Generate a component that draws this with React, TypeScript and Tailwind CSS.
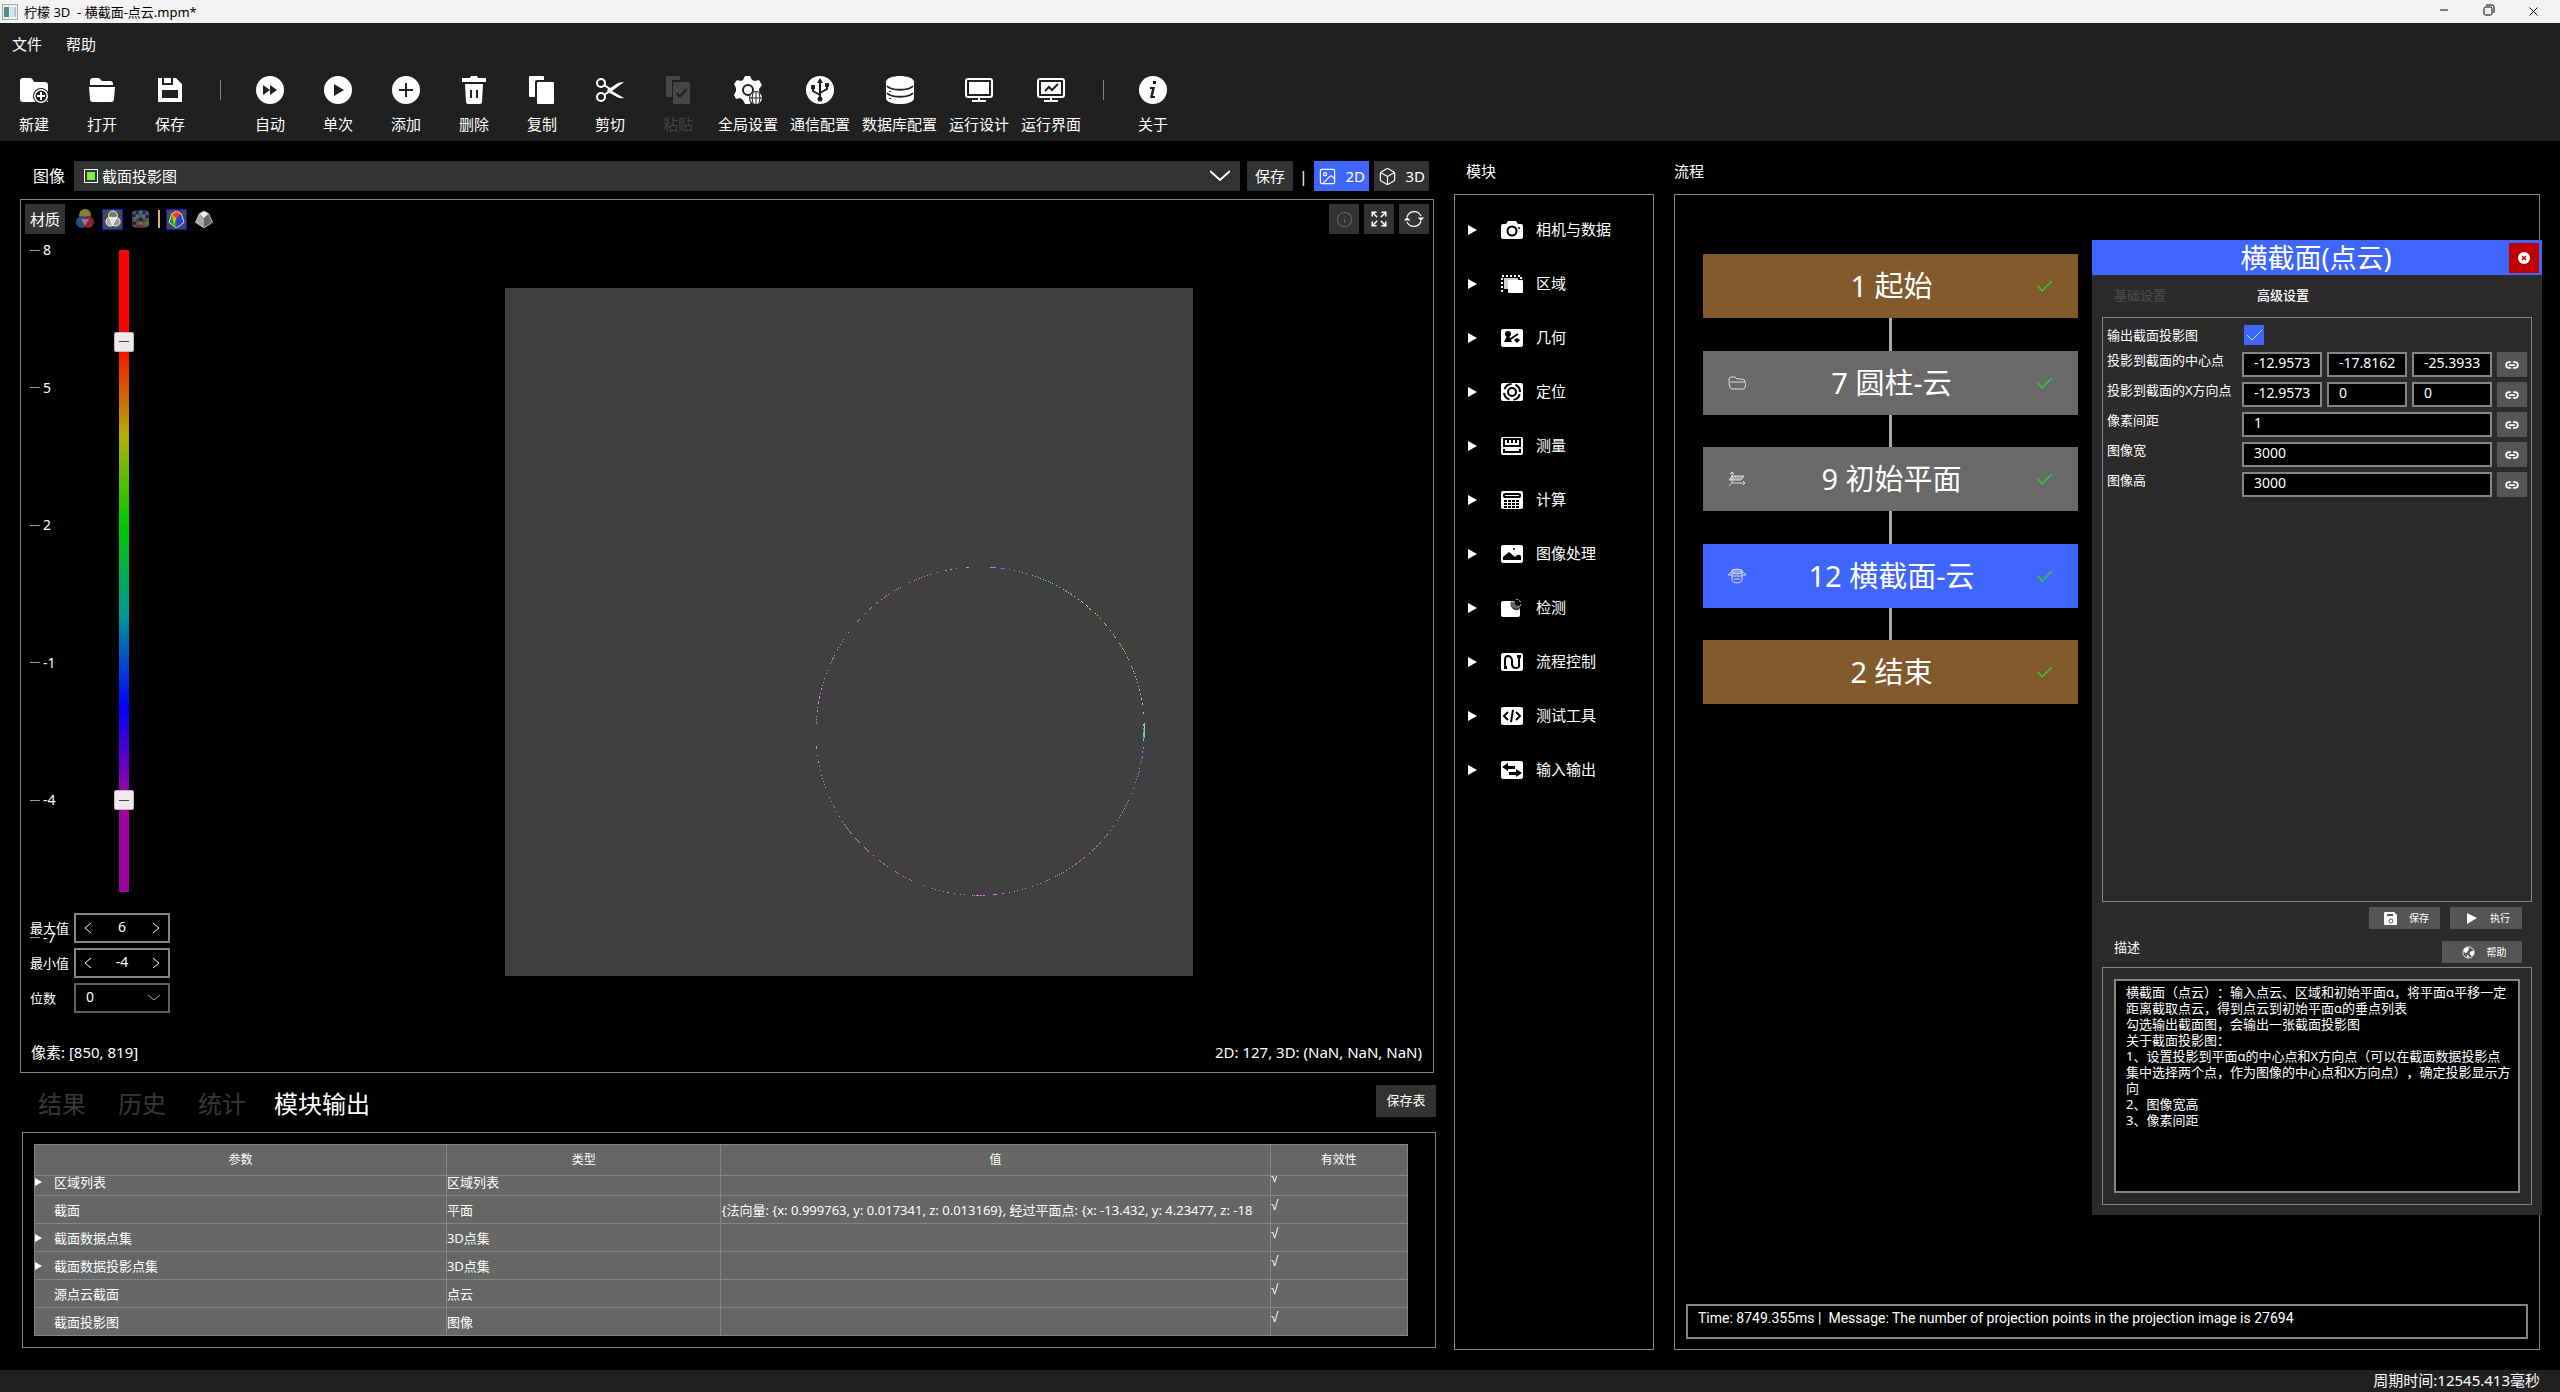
import React from "react";
import { Box, Expand, Image as ImageIcon, Info, Link2, Minus, X } from "lucide-react";

const svgProps = { viewBox: "0 0 28 28", className: "size-7", fill: "currentColor" };

const icons: Record<string, React.ReactNode> = {
  new: (
    <svg {...svgProps}>
      <path d="M0 5q0-3 3-3h7q2 0 3 2l1 2h11q3 0 3 3v17H3q-3 0-3-3z" />
      <circle cx="21" cy="20" r="8" fill="#202020" />
      <circle cx="21" cy="20" r="7" />
      <circle cx="21" cy="20" r="5.5" fill="#202020" />
      <path d="M20 16h2v3h3v2h-3v3h-2v-3h-3v-2h3z" />
    </svg>
  ),
  open: (
    <svg {...svgProps}>
      <path d="M2 9V5q0-3 3-3h5q2 0 3 2l1 1h8q3 0 3 3v1zM1 11h26l-1 12q0 3-3 3H5q-3 0-3-3z" />
    </svg>
  ),
  save: (
    <svg {...svgProps} fillRule="evenodd">
      <path d="M2 2h4v7h11V2h3l6 6v18H2zM8 2h7v5H8zM6 14v8h16v-8z" />
    </svg>
  ),
  auto: (
    <svg {...svgProps} fillRule="evenodd">
      <path d="M14 0a14 14 0 100 28 14 14 0 000-28zM7 9l7 5-7 5zm7 0l7 5-7 5z" />
    </svg>
  ),
  once: (
    <svg {...svgProps} fillRule="evenodd">
      <path d="M14 0a14 14 0 100 28 14 14 0 000-28zM10 8l10 6-10 6z" />
    </svg>
  ),
  add: (
    <svg {...svgProps} fillRule="evenodd">
      <path d="M14 0a14 14 0 100 28 14 14 0 000-28zM13 7v6H7v2h6v6h2v-6h6v-2h-6V7z" />
    </svg>
  ),
  remove: (
    <svg {...svgProps} fillRule="evenodd">
      <path d="M2 2h8l1-2h6l1 2h8v4H2zM5 8h18l-1 18q0 2-2 2H8q-2 0-2-2zM10 14v8h2v-8zm6 0v8h2v-8z" />
    </svg>
  ),
  copy: (
    <svg {...svgProps}>
      <path d="M1 1q0-1 1-1h13q1 0 1 1v3H9q-2 0-2 2v15H2q-1 0-1-1zM9 7q0-1 1-1h15q1 0 1 1v20q0 1-1 1H10q-1 0-1-1z" />
    </svg>
  ),
  cut: (
    <svg {...svgProps}>
      <g fill="none" stroke="currentColor" strokeWidth="2">
        <circle cx="5" cy="7" r="4" />
        <circle cx="5" cy="21" r="4" />
        <path d="M8 9l6 4M8 19l6-4" />
      </g>
      <path d="M11 14L22 7q3-1 6-1l-12 9 12 7q-4 1-7-1l-9-5z" />
    </svg>
  ),
  paste: (
    <svg {...svgProps} fillRule="evenodd">
      <path d="M2 1q0-1 1-1h13v4H8v17H3q-1 0-1-1zM9 7q0-1 1-1h15q1 0 1 1v20q0 1-1 1H10q-1 0-1-1zM12 18l4 4 7-8-1-2-6 7-3-3z" />
    </svg>
  ),
  settings: (
    <svg {...svgProps}>
      <path d="M11 0h5l2 4 3 1 4-1 3 5-3 4v2l3 4-3 5-4-1-3 1-2 4h-5l-2-4-3-2-4 1-2-4 2-4v-3L0 8l3-4 4 1 2-1z" />
      <circle cx="14" cy="14" r="5" fill="none" stroke="#202020" strokeWidth="2" />
      <circle cx="22" cy="22" r="7" fill="#202020" />
      <circle cx="22" cy="22" r="6" />
      <path d="M16 22h12M22 16v12M19 17q-2 5 0 10M25 17q2 5 0 10" fill="none" stroke="#202020" />
    </svg>
  ),
  comm: (
    <svg {...svgProps}>
      <circle cx="14" cy="14" r="14" />
      <g fill="none" stroke="#202020" strokeWidth="2">
        <path d="M14 5v18M14 19l-7-4v-4M14 17l7-4v-4" />
      </g>
      <path d="M14 2l3 5h-6zM5 9h4v4H5zM19 7h4v4h-4z" fill="#202020" />
      <circle cx="14" cy="23" r="2.5" fill="#202020" />
    </svg>
  ),
  database: (
    <svg {...svgProps}>
      <path d="M0 6c0-8 28-8 28 0v16c0 8-28 8-28 0z" />
      <path d="M1 10c4 5 22 5 26 0M1 17c4 5 22 5 26 0" fill="none" stroke="#202020" strokeWidth="2" />
      <path d="M3 15h2v1H3zM3 22h2v1H3z" fill="#202020" />
    </svg>
  ),
  design: (
    <svg {...svgProps}>
      <rect x="1" y="3" width="26" height="18" rx="2" fill="none" stroke="currentColor" strokeWidth="2" />
      <path d="M4 6h20v12H4zM13 21h2v3h6v2H7v-2h6z" />
    </svg>
  ),
  screen: (
    <svg {...svgProps}>
      <rect x="1" y="3" width="26" height="18" rx="2" fill="none" stroke="currentColor" strokeWidth="2" />
      <path d="M4 6h20v12H4zM13 21h2v3h6v2H7v-2h6z" />
      <path d="M8 15l4-4 3 3 6-6" fill="none" stroke="#202020" strokeWidth="2" />
    </svg>
  ),
  about: (
    <svg {...svgProps}>
      <circle cx="14" cy="14" r="14" />
      <path d="M14 5h3v3h-3zM11 11h5l-2 9h2v2h-5l2-9h-2z" fill="#202020" />
    </svg>
  ),
};

const toolbar = [
  { icon: "new", label: "新建" },
  { icon: "open", label: "打开" },
  { icon: "save", label: "保存" },
  null,
  { icon: "auto", label: "自动" },
  { icon: "once", label: "单次" },
  { icon: "add", label: "添加" },
  { icon: "remove", label: "删除" },
  { icon: "copy", label: "复制" },
  { icon: "cut", label: "剪切" },
  { icon: "paste", label: "粘贴", disabled: true },
  { icon: "settings", label: "全局设置" },
  { icon: "comm", label: "通信配置" },
  { icon: "database", label: "数据库配置" },
  { icon: "design", label: "运行设计" },
  { icon: "screen", label: "运行界面" },
  null,
  { icon: "about", label: "关于" },
];

const line = { fill: "none", stroke: "#000", strokeWidth: 2 };

const modules = [
  {
    label: "相机与数据",
    icon: (
      <>
        <path d="M0 5q0-2 2-2h3l2-3h8l2 3h3q2 0 2 2v11q0 2-2 2H2q-2 0-2-2z" />
        <circle cx="11" cy="10" r="4.5" {...line} />
        <circle cx="18" cy="7" r="1" fill="#000" />
      </>
    ),
  },
  {
    label: "区域",
    icon: (
      <>
        <path d="M1 17V1h19v4" fill="none" stroke="currentColor" strokeWidth="2" strokeDasharray="2 2" />
        <path d="M3 3h14v3H8v8H3z" opacity="0.8" />
        <rect x="7" y="5" width="15" height="13" rx="1" />
      </>
    ),
  },
  {
    label: "几何",
    icon: (
      <>
        <rect width="22" height="18" rx="2" />
        <g fill="#000">
          <circle cx="7" cy="5" r="3" />
          <path d="M6 7h2l3 6H3zM16 9l3 2-3 3-3-3z" />
        </g>
        <path d="M8 11l9-6" {...line} />
      </>
    ),
  },
  {
    label: "定位",
    icon: (
      <>
        <rect width="22" height="18" rx="2" />
        <circle cx="11" cy="9" r="4" {...line} />
        <circle cx="11" cy="9" r="8" {...line} strokeDasharray="9 4" strokeDashoffset="-2" />
      </>
    ),
  },
  {
    label: "测量",
    icon: (
      <>
        <rect width="22" height="18" rx="2" />
        <path d="M3 2h16v7H3zM7 2v4M11 2v4M15 2v4M3 12v3h16v-3" {...line} />
      </>
    ),
  },
  {
    label: "计算",
    icon: (
      <>
        <rect width="22" height="18" rx="2" />
        <rect x="3" y="3" width="16" height="3" rx="1" {...line} />
        <path d="M3 10h16M3 13h16M3 16h16" {...line} strokeDasharray="3 1" />
      </>
    ),
  },
  {
    label: "图像处理",
    icon: (
      <>
        <rect width="22" height="18" rx="2" />
        <path d="M2 15V12l6-5 6 5q3-4 6-1v4z" fill="#000" />
        <circle cx="13" cy="4" r="1" fill="#000" />
      </>
    ),
  },
  {
    label: "检测",
    icon: (
      <>
        <rect y="2" width="19" height="16" rx="2" />
        <path d="M14 2v4h5V1l2 4-2 5q-2 2-5 1-4-1-4-6 1-3 4-3z" fill="#000" opacity="0.6" />
        <path d="M14 1h5v6l-5-1z" fill="#000" />
        <circle cx="15" cy="5" r="5" fill="none" stroke="#000" strokeDasharray="2 1" />
        <path d="M15 0q4 0 5 5-1 3-3 4" fill="none" stroke="currentColor" strokeDasharray="2 2" />
      </>
    ),
  },
  {
    label: "流程控制",
    icon: (
      <>
        <rect width="22" height="18" rx="2" />
        <path d="M4 15V7q0-4 3-4t4 4v4q0 4 4 4t3-4V4" {...line} />
        <path d="M3 13h3v3H3zM16 2h4v3h-4z" fill="#000" />
      </>
    ),
  },
  {
    label: "测试工具",
    icon: (
      <>
        <rect width="22" height="18" rx="2" />
        <path d="M7 5L3 9l4 4M15 5l4 4-4 4M12 3l-2 12" {...line} />
      </>
    ),
  },
  {
    label: "输入输出",
    icon: (
      <>
        <rect width="22" height="18" rx="2" />
        <path d="M1 6l6-4v3h7v3H7v2zM21 12l-6-4v3H8v3h7v2z" fill="#000" />
      </>
    ),
  },
];

const steps = [
  { title: "1 起始", color: "bg-[#835a2c]" },
  {
    title: "7 圆柱-云",
    color: "bg-[#696969]",
    icon: <path d="M1 7V4q0-2 2-2h4l2 2h5q3 0 3 3M2 7h14q2 0 2 2l-1 3q0 2-2 2H4q-2 0-2-2L1 9q0-2 1-2z" />,
  },
  {
    title: "9 初始平面",
    color: "bg-[#696969]",
    icon: (
      <>
        <path d="M4 1v11h13M4 12l-3 3M15 10l2 2-2 2M2 3l2-2 2 2" />
        <path d="M4 5h12l-3 4H1z" fill="#ddd" fillOpacity="0.5" />
      </>
    ),
  },
  {
    title: "12 横截面-云",
    color: "bg-[#3f66ff]",
    icon: (
      <>
        <path d="M4 2q5-2 10 0v3q-5 2-10 0z" fill="#ddd" fillOpacity="0.5" />
        <path d="M4 5v7q1 3 5 3t5-3V5M4 8h10M6 11h6M4 3L0 7h4M14 3l4 4h-4" />
      </>
    ),
  },
  { title: "2 结束", color: "bg-[#835a2c]" },
];

// Section points, stored at three units per pixel.
const cloud: { color: string; points: number[][] }[] = [
  {
    color: "#d87fdc",
    points: [
      [560, 82], [563, 82], [566, 82], [530, 85], [512, 88], [515, 88], [497, 91], [500, 91], [473, 97], [452, 103],
      [443, 106], [434, 109], [425, 112], [419, 115], [410, 118], [404, 121], [389, 127], [362, 142], [356, 145],
      [350, 148], [344, 151], [326, 163], [320, 166], [317, 169], [314, 172], [305, 178], [293, 187], [290, 190],
      [275, 202], [272, 205], [269, 208], [257, 220], [239, 238], [236, 241], [233, 244], [206, 277], [191, 298],
      [188, 304], [182, 313], [176, 322], [173, 328], [164, 346], [161, 352], [158, 355], [158, 358], [155, 364],
      [152, 370], [143, 391], [140, 400], [134, 415], [131, 427], [128, 436], [125, 445], [125, 448], [122, 460],
      [119, 469], [119, 472], [119, 475], [116, 484], [116, 487], [116, 490], [113, 502], [113, 511], [113, 514],
      [110, 529], [110, 538], [110, 544], [110, 550], [110, 619], [110, 622], [110, 625], [113, 646], [116, 664],
      [116, 667], [119, 679], [122, 691], [125, 706], [128, 715], [131, 724], [134, 733], [137, 742], [149, 772],
      [155, 784], [161, 796], [164, 802], [170, 814], [179, 829], [188, 844], [194, 853], [197, 856], [200, 862],
      [203, 865], [206, 868], [209, 874], [212, 877], [215, 880], [227, 895], [230, 898], [233, 901], [236, 904],
      [239, 907], [254, 922], [257, 925], [260, 928], [263, 931], [266, 934], [281, 946], [299, 961], [302, 964],
      [311, 970], [314, 973], [323, 979], [347, 994], [350, 997], [356, 1000], [371, 1009], [377, 1012], [389, 1018],
      [395, 1021], [431, 1036], [458, 1045], [467, 1048], [479, 1051], [491, 1054], [503, 1057], [506, 1057],
      [524, 1060], [542, 1063], [554, 1063], [578, 1066], [584, 1066], [590, 1066], [593, 1066], [596, 1066],
      [602, 1066], [605, 1066], [611, 1066], [614, 1066], [641, 1063], [644, 1063], [647, 1063], [650, 1063],
      [668, 1060], [671, 1060], [689, 1057], [704, 1054], [713, 1051], [728, 1048], [737, 1045], [758, 1039],
      [773, 1033], [782, 1030], [797, 1024], [803, 1021], [809, 1018], [827, 1009], [833, 1006], [839, 1003],
      [845, 1000], [851, 997], [860, 991], [869, 985], [878, 979], [887, 973], [890, 970], [899, 964], [902, 961],
      [911, 955], [914, 952], [929, 940], [938, 931], [941, 928], [944, 925], [950, 919], [953, 916], [959, 910],
      [962, 907], [974, 892], [980, 886], [983, 883], [992, 871], [1001, 859], [1013, 841], [1019, 832], [1022, 826],
      [1028, 817], [1031, 811], [1034, 805], [1037, 799], [1040, 793], [1043, 787], [1046, 781], [1055, 760],
    ],
  },
  {
    color: "#b07ff0",
    points: [
      [632, 82], [635, 82], [638, 82], [641, 82], [644, 82], [647, 82], [1061, 745], [1067, 727], [1070, 718],
      [1073, 709], [1076, 703], [1076, 697], [1079, 694], [1079, 685],
    ],
  },
  {
    color: "#7f8cf5",
    points: [
      [665, 85], [668, 85], [674, 85], [689, 88], [704, 91], [1082, 670], [1085, 664], [1085, 655], [1088, 652],
      [1088, 649], [1088, 637], [1088, 634], [1091, 625], [1091, 622],
    ],
  },
  {
    color: "#74c9c4",
    points: [
      [719, 94], [728, 97], [740, 100], [758, 106], [1091, 601], [1091, 598], [1091, 595], [1091, 589], [1091, 586],
      [1091, 583], [1091, 580], [1091, 577], [1091, 571], [1091, 565], [1094, 592], [1094, 589], [1094, 586],
      [1094, 583], [1094, 580], [1094, 577], [1094, 574], [1094, 571], [1094, 568],
    ],
  },
  {
    color: "#7fdca0",
    points: [
      [767, 109], [776, 112], [782, 115], [791, 118], [797, 121], [806, 124], [812, 127], [818, 130], [830, 136],
      [839, 142], [1094, 565], [1094, 562], [1094, 559], [1094, 556], [1094, 553], [1094, 550], [1091, 556],
      [1091, 553], [1091, 520], [1091, 517],
    ],
  },
  {
    color: "#b4e07a",
    points: [
      [851, 148], [857, 151], [860, 154], [866, 157], [872, 160], [875, 163], [884, 169], [1088, 493], [1088, 490],
      [1085, 478], [1085, 475], [1082, 463], [1079, 451], [1079, 448], [1076, 439],
    ],
  },
  {
    color: "#dedb7a",
    points: [
      [896, 178], [905, 184], [908, 187], [920, 196], [923, 199], [929, 205], [932, 208], [947, 220], [953, 226],
      [1073, 427], [1070, 418], [1067, 409], [1064, 400], [1061, 394], [1058, 385], [1055, 379], [1046, 358],
      [1043, 352],
    ],
  },
  {
    color: "#f0b070",
    points: [
      [962, 235], [974, 250], [977, 253], [980, 256], [992, 271], [1001, 283], [1004, 289], [1007, 292], [1019, 310],
      [1022, 313], [1025, 319], [1028, 325], [1031, 328], [1034, 334], [1037, 340],
    ],
  },
];

const rows = [
  { name: "区域列表", type: "区域列表", value: "", open: true },
  {
    name: "截面",
    type: "平面",
    value: "{法向量: {x: 0.999763, y: 0.017341, z: 0.013169}, 经过平面点: {x: -13.432, y: 4.23477, z: -18",
  },
  { name: "截面数据点集", type: "3D点集", value: "", open: true },
  { name: "截面数据投影点集", type: "3D点集", value: "", open: true },
  { name: "源点云截面", type: "点云", value: "" },
  { name: "截面投影图", type: "图像", value: "" },
];

const params = [
  { label: "投影到截面的中心点", values: ["-12.9573", "-17.8162", "-25.3933"] },
  { label: "投影到截面的X方向点", values: ["-12.9573", "0", "0"] },
  { label: "像素间距", values: ["1"] },
  { label: "图像宽", values: ["3000"] },
  { label: "图像高", values: ["3000"] },
];

const description = `横截面（点云）：输入点云、区域和初始平面α，将平面α平移一定
距离截取点云，得到点云到初始平面α的垂点列表
勾选输出截面图，会输出一张截面投影图
关于截面投影图：
1、设置投影到平面α的中心点和X方向点（可以在截面数据投影点
集中选择两个点，作为图像的中心点和X方向点），确定投影显示方
向
2、图像宽高
3、像素间距`;

const TitleBar = () => (
  <header className="flex h-[23px] items-center bg-[#f3f3f3] pr-1 pl-[2px] text-black">
    <svg viewBox="0 0 16 16" className="size-4">
      <rect x="0.5" y="0.5" width="15" height="15" fill="#eee" stroke="#aaa" />
      <path d="M2 3h5v10H2z" fill="#4b8f8c" />
      <path d="M8 3h3v10H8z" fill="#cfe3ee" />
      <path d="M12 3h2v10h-2z" fill="#b4c6d0" />
    </svg>
    <h1 className="ml-1.5 flex-1 whitespace-pre text-[13px] leading-5">柠檬 3D  - 横截面-点云.mpm*</h1>
    <div className="flex">
      <button aria-label="最小化" className="flex w-[45px] justify-center">
        <Minus size={12} strokeWidth={2} />
      </button>
      <button aria-label="还原" className="flex w-[45px] justify-center">
        <svg viewBox="0 0 12 12" className="size-3" fill="none" stroke="currentColor">
          <rect x="1" y="3" width="8" height="8" rx="1.5" />
          <path d="M3 1h6q2 0 2 2v6" />
        </svg>
      </button>
      <button aria-label="关闭" className="flex w-[45px] justify-center">
        <X size={15} strokeWidth={1.5} />
      </button>
    </div>
  </header>
);

const Toolbar = () => (
  <div className="flex h-[118px] flex-col bg-[#202020] text-[15px] leading-5">
    <nav className="flex gap-6 pt-[11px] pl-3">
      <button>文件</button>
      <button>帮助</button>
    </nav>
    <div className="flex pt-[22px]">
      {toolbar.map((item, i) =>
        item ? (
          <button
            key={item.label}
            disabled={item.disabled}
            className="flex min-w-[68px] flex-col items-center gap-[10px] px-1.5 disabled:text-[#454545]"
          >
            {icons[item.icon]}
            <span>{item.label}</span>
          </button>
        ) : (
          <div key={i} className="mt-1 ml-4 mr-[15px] h-5 w-px bg-[#808080]" />
        )
      )}
    </div>
  </div>
);

const ColorScale = () => (
  <div className="relative h-[642px] text-[14px] leading-5">
    {[8, 5, 2, -1, -4, -7].map((n) => (
      <div
        key={n}
        className="absolute left-[9px] flex -translate-y-1/2 items-center gap-[3px]"
        style={{ top: `${((8 - n) / 14) * 100}%` }}
      >
        <span className="h-px w-2.5 bg-[#999]" />
        {n}
      </div>
    ))}
    <div className="absolute left-[98px] h-full w-2.5 bg-[linear-gradient(to_bottom,#f00_14.2%,#b0b000_29%,#00c800_43%,#009696_57%,#00f_71.3%,#a000a0_85%)]" />
    {[6, -4].map((n) => (
      <input
        key={n}
        type="range"
        aria-label={n > 0 ? "上限" : "下限"}
        min={-6}
        max={8}
        defaultValue={n}
        className="pointer-events-none absolute -top-2.5 left-[93px] h-[662px] w-5 appearance-none bg-transparent [direction:rtl] [writing-mode:vertical-lr] [&::-webkit-slider-thumb]:pointer-events-auto [&::-webkit-slider-thumb]:h-5 [&::-webkit-slider-thumb]:w-5 [&::-webkit-slider-thumb]:appearance-none [&::-webkit-slider-thumb]:rounded-xs [&::-webkit-slider-thumb]:border [&::-webkit-slider-thumb]:border-[#bbb] [&::-webkit-slider-thumb]:bg-[#efe9e9] [&::-webkit-slider-thumb]:bg-[linear-gradient(#444,#444)] [&::-webkit-slider-thumb]:bg-[length:10px_1px] [&::-webkit-slider-thumb]:bg-center [&::-webkit-slider-thumb]:bg-no-repeat"
      />
    ))}
  </div>
);

const Spin = ({ id, label, value }: any) => (
  <div className="flex items-center">
    <label htmlFor={id} className="w-11">
      {label}
    </label>
    <div className="flex h-[30px] w-24 items-center justify-between border-2 border-[#858585] px-2">
      <button aria-label="减小">
        <svg viewBox="0 0 8 12" className="h-3 w-2" fill="none" stroke="currentColor">
          <path d="M7 1L1 6l6 5" />
        </svg>
      </button>
      <input id={id} defaultValue={value} className="h-5 w-12 pb-1 text-center text-[14px] outline-none" />
      <button aria-label="增大">
        <svg viewBox="0 0 8 12" className="h-3 w-2" fill="none" stroke="currentColor">
          <path d="M1 1l6 5-6 5" />
        </svg>
      </button>
    </div>
  </div>
);

const Viewer = () => (
  <section className="flex min-h-0 flex-1 flex-col border border-[#858585]">
    <div className="flex h-[34px] items-end justify-between pr-1 pl-1">
      <div className="flex items-center">
        <button className="h-[30px] w-10 bg-[#333] text-[15px]">材质</button>
        <div className="ml-[11px] flex items-center gap-1.5">
          <svg viewBox="0 0 18 20" className="mr-0.5 h-5 w-[18px]">
            <circle cx="9" cy="6" r="6" fill="#85803c" />
            <circle cx="6" cy="13" r="6" fill="#1f5285" />
            <circle cx="12" cy="13" r="6" fill="#8a2430" />
            <path d="M5 10l8 0-4 7z" fill="#8f7d95" />
          </svg>
          <span className="flex size-[21px] items-center justify-center border border-[#1414c8] bg-[#484848]">
            <svg viewBox="0 0 18 20" className="h-[18px] w-4" fill="#ddd" stroke="#fff">
              <circle cx="9" cy="6" r="5" fill="#777" />
              <circle cx="6" cy="13" r="5" fill="#aaa" />
              <circle cx="12" cy="13" r="5" fill="#999" />
              <path d="M5 9h8l-4 7z" />
            </svg>
          </span>
          <svg viewBox="0 0 18 18" className="ml-[3px] h-[18px] w-[17px]">
            <rect width="18" height="18" rx="4" fill="#555" />
            <path d="M4 0h3v4H4zM11 0h3v4h-3zM0 4h4v3H0zM7 8h4v3H7zM0 12h4v3H0zM14 5h4v3h-4z" fill="#16168c" />
            <path d="M8 0h3v3H8zM4 5h3v3H4zM11 5h3v3h-3zM1 8h3v3H1zM14 12h3v3h-3zM7 12h4v3H7z" fill="#3c8c3c" />
            <path d="M4 9h3v3H4zM11 9h3v3h-3zM8 15h3v3H8zM4 15h3v3H4zM0 9h2v2H0z" fill="#8c2020" />
          </svg>
          <span className="ml-[3px] h-[18px] w-0.5 bg-[#e0b070]" />
          <span className="flex size-[21px] items-center justify-center border border-[#1414c8] bg-[#484848]">
            <svg viewBox="0 0 18 18" className="size-[17px]">
              <path d="M9 0l5 3-5 5-5-5z" fill="#f33" />
              <path d="M4 3l5 5v10l-8-6z" fill="#1a9c3c" />
              <path d="M14 3L9 8v10l8-6z" fill="#2440e0" />
              <path d="M4 3l5 5-3 7z" fill="#d8b020" />
              <path d="M9 0l5 3 3 9-8 6-8-6 3-9z" fill="none" stroke="#cfe0ff" />
            </svg>
          </span>
          <svg viewBox="0 0 18 18" className="ml-0.5 h-[17px] w-[18px]">
            <path d="M9 0l5 3-5 5-5-5z" fill="#eee" />
            <path d="M4 3l5 5v10l-9-6z" fill="#aaa" />
            <path d="M14 3L9 8v10l9-6z" fill="#666" />
            <path d="M9 0l5 3 4 9-9 6-9-6 4-9z" fill="none" stroke="#bbb" />
          </svg>
        </div>
      </div>
      <div className="flex gap-[5px]">
        <button disabled aria-label="信息" className="grid size-[30px] place-items-center bg-[#333] text-[#666]">
          <Info size={17} strokeWidth={1.5} />
        </button>
        <button aria-label="适应窗口" className="grid size-[30px] place-items-center bg-[#333]">
          <Expand size={18} strokeWidth={2} />
        </button>
        <button aria-label="刷新" className="grid size-[30px] place-items-center bg-[#333]">
          <svg viewBox="0 0 20 18" className="h-[18px] w-5" fill="none" stroke="currentColor" strokeWidth="1.2">
            <path d="M3 7a7.5 7.5 0 0114-1M17 11a7.5 7.5 0 01-14 1" />
            <path d="M15 8h4l-2 2zM5 10H1l2-2z" fill="currentColor" />
          </svg>
        </button>
      </div>
    </div>
    <div className="flex flex-1">
      <div className="relative w-[243px] pt-4">
        <ColorScale />
        <div className="mt-[21px] flex flex-col gap-[5px] pl-[9px] text-[13px] leading-4">
          <Spin id="max" label="最大值" value="6" />
          <Spin id="min" label="最小值" value="-4" />
          <div className="flex items-center">
            <label htmlFor="digits" className="w-11">
              位数
            </label>
            <div className="relative h-[30px] w-24 border-2 border-[#606060]">
              <select id="digits" className="h-6 w-full appearance-none pl-2.5 text-[14px] leading-6">
                <option>0</option>
              </select>
              <svg
                viewBox="0 0 12 8"
                className="pointer-events-none absolute top-[9px] right-2 h-2 w-3"
                fill="none"
                stroke="#aaa"
              >
                <path d="M0 1l6 5 6-5" />
              </svg>
            </div>
          </div>
        </div>
      </div>
      <div className="flex flex-1 items-center justify-center">
        <svg viewBox="0 0 688 688" className="size-[688px] bg-[#3f3f3f]" shapeRendering="crispEdges">
          <g transform="translate(275 252)">
            {cloud.map((band) =>
              band.points.map(([x, y]) => (
                <rect
                  key={`${x}-${y}`}
                  x={Math.floor(x / 3)}
                  y={Math.floor(y / 3)}
                  width="1"
                  height="1"
                  fill={band.color}
                />
              ))
            )}
          </g>
        </svg>
      </div>
    </div>
    <div className="flex h-[42px] items-center justify-between pt-0.5 pr-[11px] pl-2.5 text-[15px]">
      <span>像素: [850, 819]</span>
      <span>2D: 127, 3D: (NaN, NaN, NaN)</span>
    </div>
  </section>
);

const Output = () => (
  <section className="-mr-0.5 ml-0.5">
    <div className="flex h-8 items-center">
      <nav className="flex flex-1 items-center gap-8 pt-1.5 pl-4 text-[24px] leading-8 text-[#383838]">
        <button>结果</button>
        <button>历史</button>
        <button>统计</button>
        <button className="-ml-1 text-white">模块输出</button>
      </nav>
      <button className="h-8 w-[60px] bg-[#333] text-[13px]">保存表</button>
    </div>
    <div className="mt-[15px] border border-[#858585] py-[11px] pr-[27px] pl-[11px]">
      <table className="w-full table-fixed border-collapse border border-[#858585] bg-[#666] text-[13px]">
        <colgroup>
          <col className="w-[30%]" />
          <col className="w-[20%]" />
          <col className="w-[40%]" />
          <col className="w-[10%]" />
        </colgroup>
        <thead>
          <tr className="h-[31px] text-[12px]">
            {["参数", "类型", "值", "有效性"].map((h) => (
              <th key={h} className="border border-[#858585] font-normal">
                {h}
              </th>
            ))}
          </tr>
        </thead>
        <tbody>
          {rows.map((row, i) => (
            <tr key={row.name} className="*:border *:border-[#858585] *:p-0">
              <td>
                <div className={`flex items-end overflow-hidden leading-[26px] ${i === 0 ? "h-[19px]" : "h-[27px]"}`}>
                  <span className="flex h-[27px] w-[19px] items-center">
                    {row.open && (
                      <svg viewBox="0 0 7 8" className="h-2 w-[7px]" fill="#fff">
                        <path d="M0 0l7 4-7 4z" />
                      </svg>
                    )}
                  </span>
                  {row.name}
                </div>
              </td>
              <td>
                <div className={`flex items-end overflow-hidden leading-[26px] ${i === 0 ? "h-[19px]" : "h-[27px]"}`}>
                  {row.type}
                </div>
              </td>
              <td>
                <div className="h-[19px] overflow-hidden whitespace-nowrap leading-5">{row.value}</div>
              </td>
              <td>
                <div className={`flex items-end overflow-hidden ${i === 0 ? "h-[19px]" : "h-[27px]"}`}>
                  <span className="h-[27px] font-['Liberation_Sans',sans-serif] text-[14px] leading-[18px]">√</span>
                </div>
              </td>
            </tr>
          ))}
        </tbody>
      </table>
    </div>
  </section>
);

const Dialog = () => (
  <div
    role="dialog"
    aria-label="横截面(点云)"
    className="absolute top-[45px] -right-[3px] flex h-[975px] w-[450px] flex-col bg-[#2b2b2b] text-[13px] leading-4"
  >
    <div className="relative flex h-[35px] items-center justify-center bg-[#3f66ff]">
      <h2 className="pr-0.5 text-[27px] leading-8">横截面(点云)</h2>
      <button aria-label="关闭" className="absolute top-[3px] right-[3px] grid size-[30px] place-items-center bg-[#c00000]">
        <svg viewBox="0 0 12 12" className="size-3">
          <circle cx="6" cy="6" r="6" fill="#fff" />
          <path d="M4 4l4 4M8 4l-4 4" stroke="#c00000" strokeWidth="1.5" />
        </svg>
      </button>
    </div>
    <div className="flex gap-[91px] px-[22px] pt-3 pb-[14px]">
      <button className="text-[#505050]">基础设置</button>
      <button className="font-medium">高级设置</button>
    </div>
    <div className="mx-2.5 h-[585px] border border-[#858585] py-[7px] pr-1 pl-1">
      <div className="flex h-5 items-center">
        <label htmlFor="output" className="w-[137px]">
          输出截面投影图
        </label>
        <span className="relative size-5">
          <input id="output" type="checkbox" defaultChecked className="size-5 appearance-none bg-[#3f66ff]" />
          <svg
            viewBox="0 0 20 20"
            className="pointer-events-none absolute top-0 left-0 size-5"
            fill="none"
            stroke="#d5ddff"
          >
            <path d="M3 10l5 5L18 5" />
          </svg>
        </span>
      </div>
      <div className="mt-[7px] flex flex-col gap-[5px]">
        {params.map((p, i) => (
          <div key={p.label} className="flex gap-[5px]">
            <label htmlFor={`param-${i}`} className="w-[130px] whitespace-nowrap">
              {p.label}
            </label>
            {p.values.map((v, j) => (
              <input
                key={j}
                id={j === 0 ? `param-${i}` : undefined}
                aria-label={j === 0 ? undefined : `${p.label} ${j + 1}`}
                defaultValue={v}
                className="h-[25px] w-0 flex-1 border-2 border-[#858585] bg-black pb-1 pl-2.5 text-[14px]"
              />
            ))}
            <button aria-label="链接" className="grid h-[25px] w-[30px] place-items-center bg-[#555]">
              <Link2 size={14} strokeWidth={3} />
            </button>
          </div>
        ))}
      </div>
    </div>
    <div className="mt-[5px] flex justify-end gap-2.5 pr-5 text-[10px]">
      <button className="flex h-[22px] w-[71px] items-center justify-center gap-3 bg-[#555] pl-1">
        <svg viewBox="0 0 13 13" className="size-[13px]" fill="#fff">
          <path d="M0 1q0-1 1-1h9l3 3v9q0 1-1 1H1q-1 0-1-1z" />
          <path d="M3 2h6v2H3z" fill="#555" />
          <circle cx="7" cy="9" r="2" fill="none" stroke="#555" />
        </svg>
        保存
      </button>
      <button className="flex h-[22px] w-[72px] items-center justify-center gap-[13px] bg-[#555] pl-[5px]">
        <svg viewBox="0 0 10 11" className="h-[11px] w-2.5" fill="#fff">
          <path d="M0 0l10 5-10 6z" />
        </svg>
        执行
      </button>
    </div>
    <div className="mt-3 flex items-start justify-between pr-5 pl-[22px]">
      <label htmlFor="description" className="leading-3">
        描述
      </label>
      <button className="flex h-[22px] w-20 items-center justify-center gap-3 bg-[#555] pl-1 text-[10px]">
        <svg viewBox="0 0 14 14" className="size-[13px]">
          <circle cx="7" cy="7" r="6" fill="#555" stroke="#fff" />
          <path d="M2 3l4-2 2 2-2 3-2 2-2-2zM9 6l4-1v4l-3 2-2-3zM5 9l3 2-2 2z" fill="#fff" />
        </svg>
        帮助
      </button>
    </div>
    <div className="mx-2.5 mt-1 border border-[#858585] px-[11px] py-[11px]">
      <textarea
        id="description"
        readOnly
        value={description}
        className="block h-[214px] w-full resize-none overflow-hidden border-2 border-[#858585] bg-black pt-[3px] pl-2.5 text-[13px] leading-4 [text-spacing-trim:space-all]"
      />
    </div>
  </div>
);

const Flow = () => (
  <div className="relative mt-3 flex flex-1 flex-col justify-between border border-[#858585] px-[11px] pt-[59px] pb-2.5">
    <div className="ml-[17px] flex h-[450px] w-[375px] flex-col items-center">
      {steps.map((step, i) => (
        <React.Fragment key={step.title}>
          {i > 0 && <div className="w-[3px] flex-1 bg-[#aaa]" />}
          <button className={`grid h-16 w-full grid-cols-[43px_1fr_41px] items-center ${step.color}`}>
            <span className="flex justify-end">
              {step.icon && (
                <svg viewBox="0 0 18 16" className="h-4 w-[18px]" fill="none" stroke="#ddd">
                  {step.icon}
                </svg>
              )}
            </span>
            <span className="text-[29px] leading-10">{step.title}</span>
            <svg viewBox="0 0 16 14" className="h-3.5 w-4" fill="none" stroke="#2ecc2e" strokeWidth="1.5">
              <path d="M1 7l4 5L15 2" />
            </svg>
          </button>
        </React.Fragment>
      ))}
    </div>
    <div className="h-[35px] border-2 border-[#858585] pl-2.5 font-['Roboto',sans-serif] text-[14px] leading-6 whitespace-pre">
      Time: 8749.355ms |  Message: The number of projection points in the projection image is 27694
    </div>
    <Dialog />
  </div>
);

const App = () => {
  return (
    <div className="flex min-h-screen flex-col bg-black font-['Noto_Sans','Noto_Sans_CJK_SC',sans-serif] text-white">
      <TitleBar />
      <Toolbar />
      <main className="grid flex-1 grid-cols-[1414fr_200px_866fr] gap-5 px-5 pt-5 text-[15px]">
        <div className="flex min-w-0 flex-col pb-[22px]">
          <div className="mb-2 flex h-[30px] items-center">
            <label htmlFor="image" className="w-[54px] pl-[13px] text-[16px]">
              图像
            </label>
            <div className="relative flex-1">
              <select id="image" className="h-[30px] w-full appearance-none bg-[#333] pl-7 text-[15px]">
                <option>截面投影图</option>
              </select>
              <span className="pointer-events-none absolute top-2 left-2.5 size-3.5 border border-white p-0.5">
                <span className="block size-full bg-[#7cf53c]" />
              </span>
              <svg
                viewBox="0 0 20 12"
                className="pointer-events-none absolute top-[9px] right-2.5 h-3 w-5"
                fill="none"
                stroke="#fff"
                strokeWidth="2"
              >
                <path d="M0 1l10 9 10-9" />
              </svg>
            </div>
            <button className="ml-[7px] h-[30px] w-[46px] bg-[#333]">保存</button>
            <span className="w-[21px] text-center">|</span>
            <button className="flex h-[30px] w-[55px] items-center justify-between bg-[#3f66ff] px-1">
              <ImageIcon size={19} strokeWidth={1.5} />
              2D
            </button>
            <button className="mr-[5px] ml-[5px] flex h-[30px] w-[55px] items-center justify-between bg-[#333] px-1">
              <Box size={19} strokeWidth={1.5} />
              3D
            </button>
          </div>
          <Viewer />
          <div className="h-3" />
          <Output />
        </div>
        <div className="flex flex-col pb-5">
          <h2 className="pl-3 leading-[21px]">模块</h2>
          <ul className="mt-3 flex-1 border border-[#858585] pt-2">
            {modules.map((m) => (
              <li key={m.label}>
                <button className="flex h-[54px] w-full items-center pl-[13px]">
                  <svg viewBox="0 0 9 10" className="mr-6 h-2.5 w-[9px]" fill="#fff">
                    <path d="M0 0l9 5-9 5z" />
                  </svg>
                  <svg viewBox="0 0 22 18" className="mr-[13px] h-[18px] w-[22px]" fill="currentColor">
                    {m.icon}
                  </svg>
                  <span className="pb-0.5">{m.label}</span>
                </button>
              </li>
            ))}
          </ul>
        </div>
        <div className="flex min-w-0 flex-col pb-5">
          <h2 className="leading-[21px]">流程</h2>
          <Flow />
        </div>
      </main>
      <footer className="h-[22px] bg-[#202020] pr-5 text-right text-[15px] leading-5">
        周期时间:12545.413毫秒
      </footer>
    </div>
  );
};

export default App;
